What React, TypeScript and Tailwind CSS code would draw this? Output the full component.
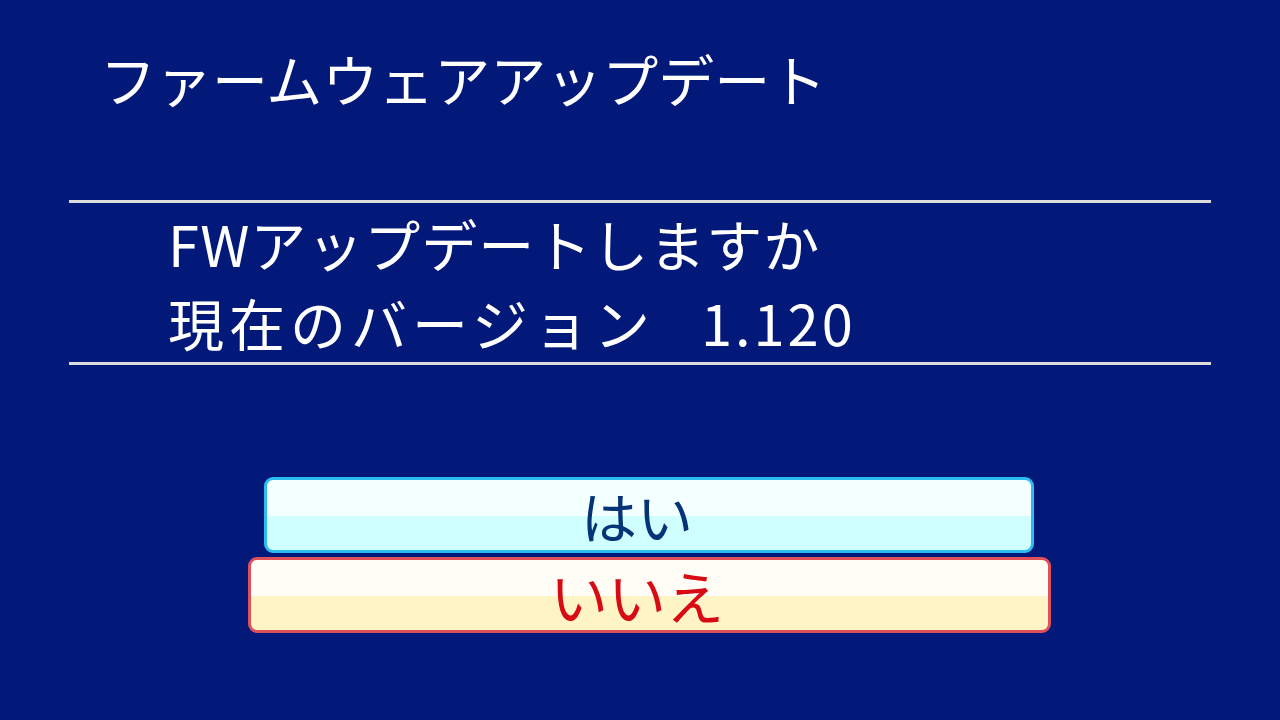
export default function App() {
  const font = { fontFamily: '"Noto Sans CJK JP", "Noto Sans", sans-serif' };
  return (
    <div className="w-[1280px] h-[720px] bg-[#02197a] overflow-hidden flex flex-col" style={font}>
      {/* Title */}
      <h1 className="pl-[100px] pt-[38px] h-[200px] text-white text-[56px] leading-[80px] font-normal">
        ファームウェアアップデート
      </h1>

      {/* Info panel */}
      <div className="mx-[69px] border-t-[3px] border-b-[3px] border-[#dcdcdc] pb-[1px] pl-[99px] text-white text-[56px] leading-[79px]">
        <p className="tracking-[1px]">FWアップデートしますか</p>
        <p className="tracking-[5px]">
          現在のバージョン<span className="ml-[46px] tracking-[3px]">1.120</span>
        </p>
      </div>

      {/* Choices */}
      <div className="mt-[112px] pl-[18px] flex flex-col items-center gap-[4px]">
        <button className="w-[770px] h-[76px] pr-[24px] rounded-[9px] border-[3px] border-[#2cbcf0] bg-[linear-gradient(to_bottom,#f4ffff_0%,#f4ffff_52%,#cfffff_52%,#cfffff_100%)] text-[#043478] text-[56px] leading-none flex items-center justify-center">
          はい
        </button>
        <button className="w-[803px] h-[76px] pr-[24px] rounded-[9px] border-[3px] border-[#e0505a] bg-[linear-gradient(to_bottom,#fffdf6_0%,#fffdf6_52%,#fff4c6_52%,#fff4c6_100%)] text-[#d80a14] text-[58px] leading-none flex items-center justify-center">
          いいえ
        </button>
      </div>
    </div>
  );
}
